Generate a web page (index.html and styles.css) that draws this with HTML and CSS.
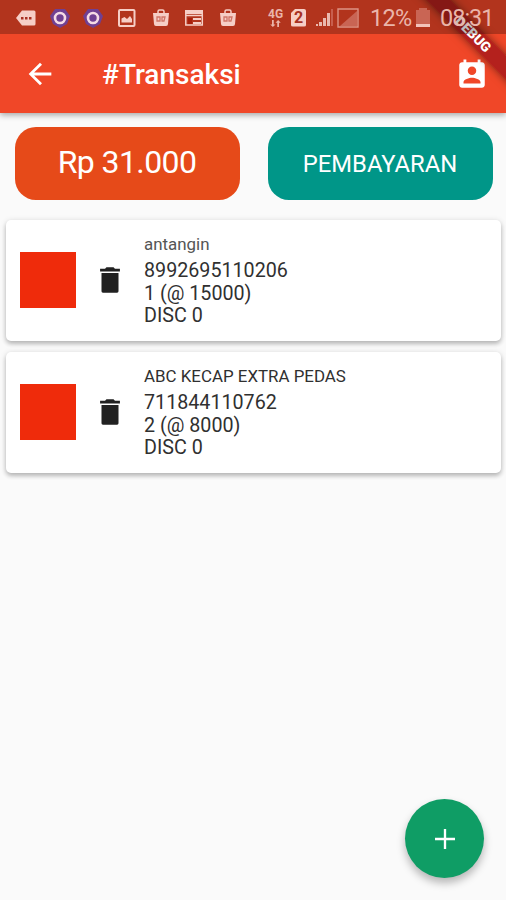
FILE: index.html
```html
<!DOCTYPE html>
<html lang="id">
<head>
    <meta charset="utf-8">
    <title>#Transaksi</title>
    <link rel="stylesheet" href="styles.css">
</head>
<body>
    <div class="top">
        <div class="status-bar">
            <div class="notifications">
                <svg viewBox="0 0 20 20"><path fill="#f6cec6" d="M6 2.500h12q1.500 0 1.500 1.500v12q0 1.500-1.500 1.500H6L0 10z"/><path fill="#a83022" d="M5 9h2.500v2.500H5zM9 9h2.500v2.500H9zM13 9h2.500v2.500H13z"/></svg>
                <svg viewBox="0 0 20 20"><path fill="#704092" d="M5 1l10 0 5 7-3 8-7 4-7-4-3-8z"/><circle cx="10" cy="10" r="5" fill="#704092" stroke="#f5dbe5" stroke-width="2.600"/></svg>
                <svg viewBox="0 0 20 20"><path fill="#704092" d="M5 1l10 0 5 7-3 8-7 4-7-4-3-8z"/><circle cx="10" cy="10" r="5" fill="#704092" stroke="#f5dbe5" stroke-width="2.600"/></svg>
                <svg viewBox="0 0 20 20"><rect x="2" y="2" width="15.500" height="16" rx="1" fill="none" stroke="#f6cec6" stroke-width="2"/><path fill="#f6cec6" d="M4.500 14.500v-4l3-1.500 2.500 2 3-3 2 3v3.500z"/></svg>
                <svg viewBox="0 0 20 20"><path fill="none" stroke="#f6cec6" stroke-width="1.500" d="M7 6V3.500q0-1.500 1.500-1.500h3q1.500 0 1.500 1.500V6"/><path fill="#f6cec6" d="M2 5h16l-1 11q0 2-2 2H5q-2 0-2-2z"/><path fill="none" stroke="#cf7567" stroke-width="1.300" d="M6 9h3v4H6zM11 9h3l-1 4h-2z"/></svg>
                <svg viewBox="0 0 20 20"><path fill="#f6cec6" d="M1 2h18v4H1z"/><path fill="none" stroke="#f6cec6" stroke-width="1.500" d="M1.800 6v11h16.500V6M2 7.500h16"/><path fill="#f6cec6" d="M9 10h8v2H9zM9 14h8v2H9z"/><path fill="#a81f0c" d="M4 10h4v6H4z"/></svg>
                <svg viewBox="0 0 20 20"><path fill="none" stroke="#f6cec6" stroke-width="1.500" d="M7 6V3.500q0-1.500 1.500-1.500h3q1.500 0 1.500 1.500V6"/><path fill="#f6cec6" d="M2 5h16l-1 11q0 2-2 2H5q-2 0-2-2z"/><path fill="none" stroke="#cf7567" stroke-width="1.300" d="M6 9h3v4H6zM11 9h3l-1 4h-2z"/></svg>
            </div>
            <div class="system">
                <div class="network">
                    <span>4G</span>
                    <svg viewBox="0 0 12 8"><path d="M4 0v5h2L3 8 0 5h2V0zM8 8V3H6l3-3 3 3h-2v5z"/></svg>
                </div>
                <div class="sim">2</div>
                <svg class="signal" viewBox="0 0 18 19"><path fill="#eab9ae" d="M0 16h2v2H0zM3 14h3v4H3zM7 10h3v8H7zM11 5h3v13h-3z"/><path fill="#c85e4e" d="M15 1h2v17h-2z"/></svg>
                <svg class="no-signal" viewBox="0 0 22 20"><path fill="#c96554" d="M20 3v15H3z"/><path fill="none" stroke="#dd9284" stroke-width="1.400" d="M1 1h20v18H1z"/></svg>
                <span class="percent">12%</span>
                <svg class="battery" viewBox="0 0 15 20"><path fill="#c96554" d="M3 0h8v2h3v14H0V2h3z"/><path fill="#f3c4ba" d="M0 16h14v3H0z"/></svg>
                <span class="clock">08:31</span>
            </div>
        </div>

        <header class="app-bar">
            <svg class="back" viewBox="0 0 24 24"><path d="M20 11H7.830l5.590-5.590L12 4l-8 8 8 8 1.410-1.410L7.830 13H20v-2z"/></svg>
            <h1>#Transaksi</h1>
            <svg class="contact" viewBox="0 0 24 24"><path d="M19 3h-1V1h-2v2H8V1H6v2H5c-1.110 0-2 .9-2 2v14c0 1.100.89 2 2 2h14c1.100 0 2-.9 2-2V5c0-1.100-.9-2-2-2zm-7 3c1.660 0 3 1.340 3 3s-1.340 3-3 3-3-1.340-3-3 1.340-3 3-3zm6 12H6v-1c0-2 4-3.100 6-3.100s6 1.100 6 3.100v1z"/></svg>
        </header>
    </div>

    <div class="actions">
        <div class="button total">Rp 31.000</div>
        <div class="button pay">PEMBAYARAN</div>
    </div>

    <div class="list">
        <div class="card">
            <div class="thumb"></div>
            <svg class="trash" viewBox="0 0 24 24"><path d="M6 20q0 1 1 1h10q1 0 1-1V7H6v13zM19 4h-3.500l-1-1h-5l-1 1H5v2h14V4z"/></svg>
            <div class="info">
                <div class="name lower">antangin</div>
                <div>8992695110206</div>
                <div>1 (@ 15000)</div>
                <div>DISC 0</div>
            </div>
        </div>
        <div class="card">
            <div class="thumb"></div>
            <svg class="trash" viewBox="0 0 24 24"><path d="M6 20q0 1 1 1h10q1 0 1-1V7H6v13zM19 4h-3.500l-1-1h-5l-1 1H5v2h14V4z"/></svg>
            <div class="info">
                <div class="name">ABC KECAP EXTRA PEDAS</div>
                <div>711844110762</div>
                <div>2 (@ 8000)</div>
                <div>DISC 0</div>
            </div>
        </div>
    </div>

    <div class="fab">
        <svg viewBox="0 0 24 24"><path d="M18 12.700h-5.300V18h-1.400v-5.300H6v-1.400h5.300V6h1.400v5.300H18z"/></svg>
    </div>

    <div class="debug"><div class="banner">DEBUG</div></div>
</body>
</html>
```

FILE: styles.css
```css
* {
    box-sizing: border-box;
}

body {
    margin: 0;
    height: 900px;
    background-color: #fafafa;
    color: #303030;
    font-family: Roboto, sans-serif;
    overflow: hidden;
    position: relative;
}

svg {
    display: block;
    flex: none;
}

.top {
    background-color: #f04728;
    box-shadow: 0 2px 6px rgba(0, 0, 0, 0.35);
}

/* translucent, drawn over the debug ribbon */
.status-bar {
    position: relative;
    z-index: 2;
    height: 34px;
    padding: 1px 12px 0 16px;
    background-color: rgba(0, 0, 0, 0.26);
    color: #eab5aa;
    display: flex;
    justify-content: space-between;
    align-items: center;
}

.notifications {
    display: flex;
    gap: 13.700px;
}

.notifications svg {
    width: 20px;
    height: 20px;
}

.system {
    display: flex;
    align-items: center;
}

.network {
    width: 16px;
    margin-right: 7px;
    font-size: 12px;
    font-weight: bold;
    line-height: 10px;
}

.network svg {
    width: 11px;
    height: 7px;
    margin: 1px 0 0 2px;
    fill: #eab5aa;
}

.sim {
    width: 15px;
    height: 18px;
    margin-right: 10px;
    background-color: #f6cec6;
    color: #a83022;
    border-radius: 2px;
    clip-path: polygon(30% 0, 100% 0, 100% 100%, 0 100%, 0 25%);
    font-size: 16px;
    font-weight: bold;
    line-height: 18px;
    text-align: center;
}

.signal {
    width: 18px;
    height: 19px;
    margin-right: 3px;
}

.no-signal {
    width: 22px;
    height: 20px;
    margin-right: 11px;
}

.percent {
    width: 42px;
    font-size: 23.500px;
    letter-spacing: -0.700px;
    margin-right: 4px;
}

.battery {
    width: 15px;
    height: 20px;
    margin-right: 9px;
}

.clock {
    width: 54px;
    font-size: 23.500px;
    letter-spacing: -1px;
}

.app-bar {
    height: 79px;
    padding: 0 17px 0 23px;
    color: #fff;
    display: flex;
    align-items: center;
}

.app-bar svg {
    width: 34px;
    height: 34px;
    fill: #fff;
}

.app-bar .contact {
    margin-top: 3px;
}

.app-bar h1 {
    flex: 1;
    margin: 2px 0 0 45px;
    font-size: 28px;
    font-weight: 500;
}

.actions {
    display: flex;
    gap: 28px;
    padding: 14px 13.500px 0 14.500px;
}

.button {
    flex: 1;
    height: 72.500px;
    border-radius: 21px;
    color: #fff;
    display: flex;
    align-items: center;
    justify-content: center;
}

.total {
    padding-bottom: 2px;
    background-color: #e64a19;
    font-size: 32px;
    letter-spacing: -0.600px;
}

.pay {
    padding-top: 1px;
    background-color: #009688;
    font-size: 23.800px;
}

.list {
    padding: 20px 5px 0 6px;
    display: flex;
    flex-direction: column;
    gap: 11.200px;
}

.card {
    height: 121px;
    padding-left: 14px;
    border-radius: 5px;
    background-color: #fff;
    box-shadow: 0 3px 4px rgba(0, 0, 0, 0.2), 0 1px 6px rgba(0, 0, 0, 0.14);
    display: flex;
    align-items: center;
}

.thumb {
    width: 56px;
    height: 56px;
    margin-bottom: 1px;
    background-color: #ef2b0b;
}

.trash {
    width: 34px;
    height: 34px;
    margin: 0 0 1px 17px;
    fill: #212121;
}

.info {
    margin-left: 17px;
    font-size: 19.700px;
    line-height: 22.400px;
}

.name {
    font-size: 16.900px;
    margin-bottom: 5px;
}

.lower {
    color: #555;
}

.fab {
    position: absolute;
    right: 22px;
    bottom: 22px;
    width: 79px;
    height: 79px;
    border-radius: 50%;
    background-color: #0f9d65;
    box-shadow: 0 5px 9px rgba(0, 0, 0, 0.28);
    display: flex;
    align-items: center;
    justify-content: center;
}

.fab svg {
    width: 40px;
    height: 40px;
    fill: #fff;
}

.debug {
    position: absolute;
    top: 0;
    right: 0;
    z-index: 1;
    width: 110px;
    height: 110px;
    overflow: hidden;
}

/* centre of the ribbon sits 34px in from both edges of the corner */
.banner {
    position: absolute;
    top: 26px;
    right: -37px;
    width: 140px;
    height: 17px;
    background-color: rgba(160, 20, 25, 0.75);
    box-shadow: 0 0 9px rgba(0, 0, 0, 0.5);
    color: #fff;
    font-size: 13.800px;
    font-weight: 900;
    line-height: 17px;
    text-align: center;
    transform: rotate(45deg);
}
```
